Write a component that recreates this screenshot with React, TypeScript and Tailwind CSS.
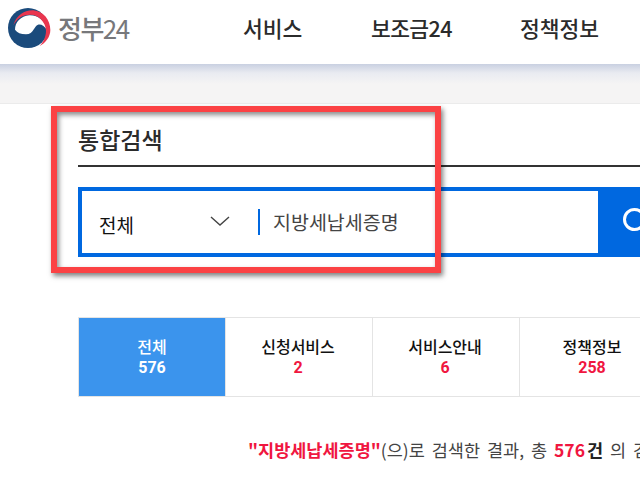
const FONT = "font-['Noto_Sans_CJK_KR','Noto_Sans',sans-serif]";

const TABS = [
  { label: '전체', count: '576', active: true },
  { label: '신청서비스', count: '2', active: false },
  { label: '서비스안내', count: '6', active: false },
  { label: '정책정보', count: '258', active: false },
];

function Logo() {
  return (
    <svg viewBox="0 0 150 138" className="w-[50px] h-[46px] shrink-0 mb-[2px]">
      <circle cx="72" cy="72" r="60" fill="#1b4b7c" />
      <path d="M33 77C33 55 50 36 76 34C102 33 124 50 129 78C122 66 112 60 102 62C90 65 90 90 66 91C50 91 40 86 33 77Z" fill="#fff" />
      <path d="M28 64C36 36 60 18 88 19C118 21 139 48 139 78C139 98 126 116 106 127C118 114 126 98 126 80C125 54 104 32 78 32C56 32 38 44 28 64Z" fill="#e9364f" />
    </svg>
  );
}

export default function App() {
  return (
    <div className={`relative w-[640px] h-[480px] overflow-hidden bg-white ${FONT}`}>
      <header className="h-[64px] flex items-center pl-[4px] pb-[8px] bg-white">
        <Logo />
        <span className="text-[#77787b] text-[26px] tracking-[-1.5px] font-medium ml-[4px] w-[185px] leading-none">
          정부<span className="font-normal">24</span>
        </span>
        <nav className="flex font-medium text-[21.500px] text-[#2b2b2b] leading-none">
          <span className="w-[128px]">서비스</span>
          <span className="w-[149px] tracking-[-0.6px]">보조금24</span>
          <span className="whitespace-nowrap">정책정보</span>
        </nav>
      </header>

      <div className="h-[40px] bg-[#f5f4f4] border-b border-[#ebebeb] bg-[linear-gradient(#c9d0e1,#e9ebf1_9px,#f5f4f4_20px)]" />

      <main className="pl-[78px]">
        <div className="w-[562px]">
          <h1 className="h-[63px] pt-[17px] text-[23px] font-medium text-[#2b2b2b] leading-[36px] border-b-2 border-[#333]">통합검색</h1>

          <div className="mt-[20px] w-[600px] h-[70px] flex border-4 border-[#0068e0]">
            <div className="w-[178px] shrink-0 flex items-center pl-[17px] relative">
              <span className="w-[111px] text-[19px] text-[#111] mt-[6px]">전체</span>
              <svg viewBox="0 0 20 10" className="w-[20px] h-[10px] -mt-[2px]" fill="none" stroke="#444" strokeWidth="1.400">
                <path d="M1 1l9 8 9-8" />
              </svg>
              <span className="absolute right-0 top-[18px] w-[2px] h-[26px] bg-[#0068e0]" />
            </div>
            <div className="flex-1 pl-[13px] pt-[16px] text-[19.500px] text-[#444] leading-[30px] whitespace-nowrap">지방세납세증명</div>
            <div className="w-[80px] shrink-0 bg-[#0068e0] -mr-[4px]" />
          </div>

          <div className="mt-[60px] w-[600px] h-[80px] flex border border-[#e4e4e4]">
            {TABS.map((t, i) => (
              <div
                key={t.label}
                className={
                  t.active
                    ? 'w-[146px] shrink-0 flex flex-col items-center justify-center bg-[#3b94ed] text-white text-[16px] leading-[21px]'
                    : 'w-[147px] shrink-0 flex flex-col items-center justify-center border-l border-[#e4e4e4] pr-[2px] text-[16px] leading-[21px] text-[#111]'
                }
              >
                <span className="font-medium">{t.label}</span>
                <span className={i === 0 ? "font-['Roboto',sans-serif] text-[16px] font-bold" : "font-['Roboto',sans-serif] text-[16px] font-bold text-[#f0163f]"}>{t.count}</span>
              </div>
            ))}
          </div>

          <p className="mt-[41px] ml-[170px] text-[17.500px] leading-[24px] text-[#444] whitespace-nowrap [word-spacing:3px]">
            <b className="text-[#f0163f] font-bold">"지방세납세증명"</b>(으)로 검색한 결과, 총{' '}
            <b className="text-[#f0163f] font-bold">576</b>
            <b className="text-[#222] font-bold ml-[2px]">건</b> 의 검
          </p>
        </div>
      </main>

      {/* search icon, cut by the window edge */}
      <span className="absolute left-[623px] top-[208px] w-[23px] h-[23px] rounded-full border-[3px] border-white" />

      {/* red annotation box */}
      <div className="absolute left-[51px] top-[106px] w-[390px] h-[167px] border-[6px] border-[#fb4244] shadow-[2px_3px_5px_rgba(0,0,0,0.5),inset_2px_3px_5px_rgba(0,0,0,0.45)]" />
    </div>
  );
}
